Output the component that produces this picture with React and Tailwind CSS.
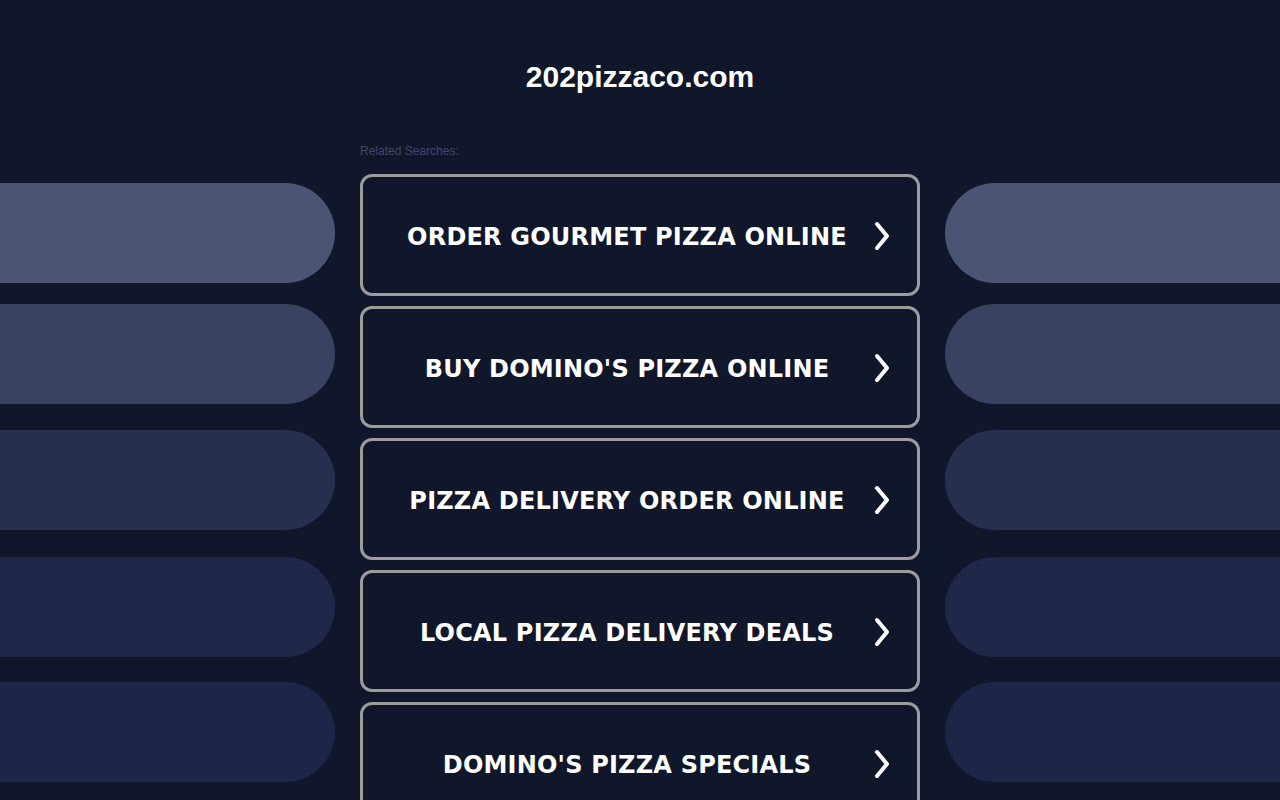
const searches = [
  'ORDER GOURMET PIZZA ONLINE',
  "BUY DOMINO'S PIZZA ONLINE",
  'PIZZA DELIVERY ORDER ONLINE',
  'LOCAL PIZZA DELIVERY DEALS',
  "DOMINO'S PIZZA SPECIALS",
]

const dots = 'bg-[radial-gradient(rgba(70,85,130,0.25)_0.5px,transparent_0.8px)] bg-[length:4px_4px]'

const pills = [
  { cls: 'bg-[#4b5472]', mt: 'mt-[183px]' },
  { cls: 'bg-[#3a4261]', mt: 'mt-[21px]' },
  { cls: 'bg-[#262f4e]', mt: 'mt-[26px]' },
  { cls: 'bg-[#1e2747]', mt: 'mt-[27px]' },
  { cls: 'bg-[#1c2545]', mt: 'mt-[25px]' },
]

function Chevron() {
  return (
    <svg width="18" height="30" viewBox="0 0 18 30" className="shrink-0 mr-[26px] mt-[2px]">
      <polyline
        points="4,3 14,15 4,27"
        fill="none"
        stroke="#fff"
        strokeWidth="4"
        strokeLinecap="round"
        strokeLinejoin="round"
      />
    </svg>
  )
}

function SidePills({ side }) {
  const round = side === 'left' ? 'rounded-r-[50px]' : 'rounded-l-[50px]'
  return (
    <div className="flex flex-col">
      {pills.map((p, i) => (
        <div key={i} className={`${p.mt} h-[100px] ${round} ${p.cls} relative overflow-hidden`}>
          {i >= 3 && <div className={`absolute inset-0 ${dots}`} />}
        </div>
      ))}
    </div>
  )
}

export default function App() {
  return (
    <div
      className="h-[800px] overflow-hidden bg-[#11172b] grid grid-cols-[335px_560px_335px] gap-x-[25px]"
      style={{ fontFamily: '"Liberation Sans", Arial, sans-serif' }}
    >
      <SidePills side="left" />

      <div className="flex flex-col">
        <h1 className="mt-[57px] text-center text-[30px] leading-[40px] font-bold text-white">
          202pizzaco.com
        </h1>
        <p className="mt-[47px] text-[12px] leading-[14px] text-[#3e4868]">Related Searches:</p>
        <div className="mt-[16px] flex flex-col gap-[10px]">
          {searches.map(s => (
            <a
              key={s}
              href="#"
              className="h-[122px] shrink-0 rounded-[12px] border-[3px] border-[#9c9c9c] bg-[#11172b] flex items-center"
            >
              <span
                className="flex-1 text-center pl-[18px] pt-[3px] text-[24px] font-bold text-white tracking-[0.2px]"
                style={{ fontFamily: '"DejaVu Sans", Verdana, sans-serif' }}
              >
                {s}
              </span>
              <Chevron />
            </a>
          ))}
        </div>
      </div>

      <SidePills side="right" />
    </div>
  )
}
